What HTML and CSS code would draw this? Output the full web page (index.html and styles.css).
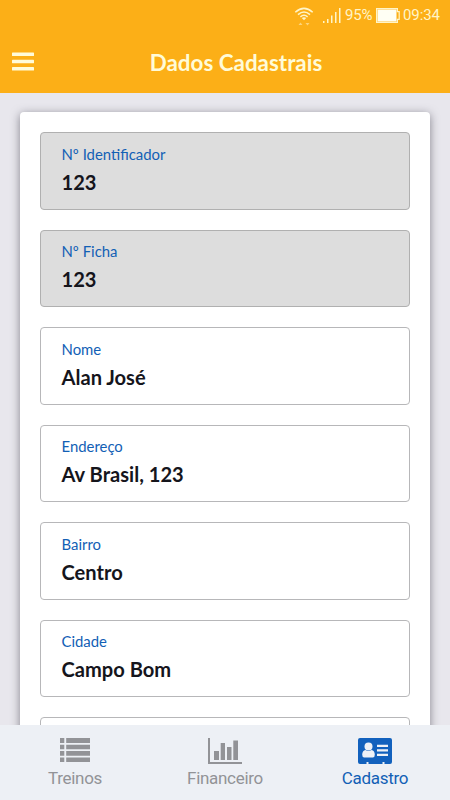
FILE: index.html
```html
<!DOCTYPE html>
<html lang="pt-BR">
<head>
<meta charset="utf-8">
<title>Dados Cadastrais</title>
<link rel="stylesheet" href="styles.css">
</head>
<body>
<div class="app">
  <header class="header">
    <div class="status">
      <svg class="wifi" width="20" height="20" viewBox="0 0 20 20" fill="none" stroke="#fff5c8" stroke-width="1.5"><path d="M1.3 6.2Q10-1.5 18.7 6.2M4 8.6Q10 3.3 16 8.6M6.4 10.8Q10 7.8 13.6 10.8"/><path d="M7.8 12Q10 10.6 12.2 12L10 14.3Z" fill="#fff5c8" stroke="none"/><path d="M4.5 19 6.5 16.5l2 2.5ZM11.5 17h4l-2 2.5Z" fill="#fdd47a" stroke="none"/></svg>
      <svg class="signal" width="18" height="16" viewBox="0 0 18 16" fill="#fff5c8"><path d="M0 13h1.5v2H0zM4 11h1.5v4H4zM8 7.5h1.5V15H8zM12 4h1.5v11H12zM16 0h1.5v15H16z"/></svg>
      <span class="percent">95%</span>
      <svg class="battery" width="24" height="15" viewBox="0 0 24 15"><path d="M.6.6h20.8v3h1.8v7.8h-1.8v3H.6z" fill="none" stroke="#fff5c8" stroke-width="1.2"/><path d="M1.5 1.5h19v12h-19z" fill="#fffff4"/></svg>
      <span class="clock">09:34</span>
    </div>
    <div class="toolbar">
      <svg class="menu" width="22" height="20" viewBox="0 0 22 20" fill="#fffbd8"><rect y="0.5" width="22" height="3.6" rx=".6"/><rect y="7.7" width="22" height="3.6" rx=".6"/><rect y="14.9" width="22" height="3.6" rx=".6"/></svg>
      <h1 class="title">Dados Cadastrais</h1>
    </div>
  </header>
  <main class="content">
    <form class="card">
      <div class="field locked"><span class="label">Nº Identificador</span><span class="value">123</span></div>
      <div class="field locked"><span class="label">Nº Ficha</span><span class="value">123</span></div>
      <div class="field"><span class="label">Nome</span><span class="value">Alan José</span></div>
      <div class="field"><span class="label">Endereço</span><span class="value">Av Brasil, 123</span></div>
      <div class="field"><span class="label">Bairro</span><span class="value">Centro</span></div>
      <div class="field"><span class="label">Cidade</span><span class="value">Campo Bom</span></div>
      <div class="field"></div>
    </form>
  </main>
  <nav class="tabs">
    <div class="tab">
      <svg width="34" height="26" viewBox="0 0 34 26" fill="#929397"><path d="M2 0h4.3v5H2zM8.2 0H32v5H8.2zM2 6.8h4.3v4.5H2zM8.2 6.8H32v4.5H8.2zM2 13h4.3v4.7H2zM8.2 13H32v4.7H8.2zM2 19.5h4.3V24H2zM8.2 19.5H32V24H8.2z"/></svg>
      <span>Treinos</span>
    </div>
    <div class="tab">
      <svg width="34" height="26" viewBox="0 0 34 26" fill="#929397"><path d="M0 0h2v24h32v2H0zM6 13h5v9H6zM12.7 5H17v17h-4.3zM19 9h4.5v13H19zM25.3 2.5H30V22h-4.7z"/></svg>
      <span>Financeiro</span>
    </div>
    <div class="tab active">
      <svg width="34" height="26" viewBox="0 0 34 26"><path d="M2 0h30q2 0 2 2v22q0 2-2 2h-5.5v-2h-2v2h-14v-2h-2v2H2q-2 0-2-2V2Q0 0 2 0z" fill="#1261bd"/><circle cx="10.5" cy="8.5" r="4" fill="#eef1f6"/><path d="M7.5 12q3 2.2 6 0 3.3.8 3.3 4.8 0 2.7-2 2.7H6.2q-2 0-2-2.7 0-4 3.3-4.8zM19 6.8h11V9H19zM19 11.3h11v2.2H19zM19 15.7h11V18H19z" fill="#eef1f6"/></svg>
      <span>Cadastro</span>
    </div>
  </nav>
</div>
</body>
</html>
```
FILE: styles.css
```css
* { box-sizing: border-box; }
body { margin: 0; font-family: Lato, sans-serif; }
.app { width: 450px; height: 800px; display: flex; flex-direction: column; overflow: hidden; background: #e8e7ed; }
.header { height: 92.5px; flex: none; background: #fcaf17; color: #fffbd8; }
.status { height: 31px; display: flex; align-items: center; justify-content: flex-end; padding-right: 10px; font: 15px/31px Roboto, sans-serif; color: #fff5c8; }
.wifi { margin: 0 9px 0 0; }
.signal { margin-right: 4px; }
.percent { width: 27px; letter-spacing: -.2px; }
.battery { margin: 0 3px 0 4px; }
.clock { width: 37px; letter-spacing: -.1px; }
.toolbar { height: 62px; display: grid; grid-template-columns: 44px 1fr 22px; align-items: center; }
.menu { margin-left: 12px; }
.title { margin: 1px 0 0; text-align: center; font-size: 22.4px; line-height: 28px; font-weight: 700; }
.content { flex: 1; min-height: 0; padding: 19.5px 20px; overflow: hidden; }
.card { display: flex; flex-direction: column; gap: 20px; padding: 20px; background: #fff; border-radius: 4px; box-shadow: 0 2px 10px rgba(50, 48, 60, .55); }
.field { height: 77.5px; flex: none; display: flex; flex-direction: column; padding: 10.5px 20.5px; border: 1px solid #b7b7b9; border-radius: 4px; color: #15151c; }
.locked { background: #ddd; border-color: #b0b0b0; }
.label { font-size: 14.9px; line-height: 20px; color: #1260b5; }
.value { margin-top: 4px; font-size: 20.1px; line-height: 28px; font-weight: 700; }
.tabs { height: 75px; flex: none; display: flex; background: #edf0f5; }
.tab { flex: 1; display: flex; flex-direction: column; align-items: center; padding-top: 13px; font: 17px/22px Roboto, sans-serif; letter-spacing: -.3px; color: #929397; }
.tab span { margin-top: 3px; }
.active { color: #1260b5; }
```
